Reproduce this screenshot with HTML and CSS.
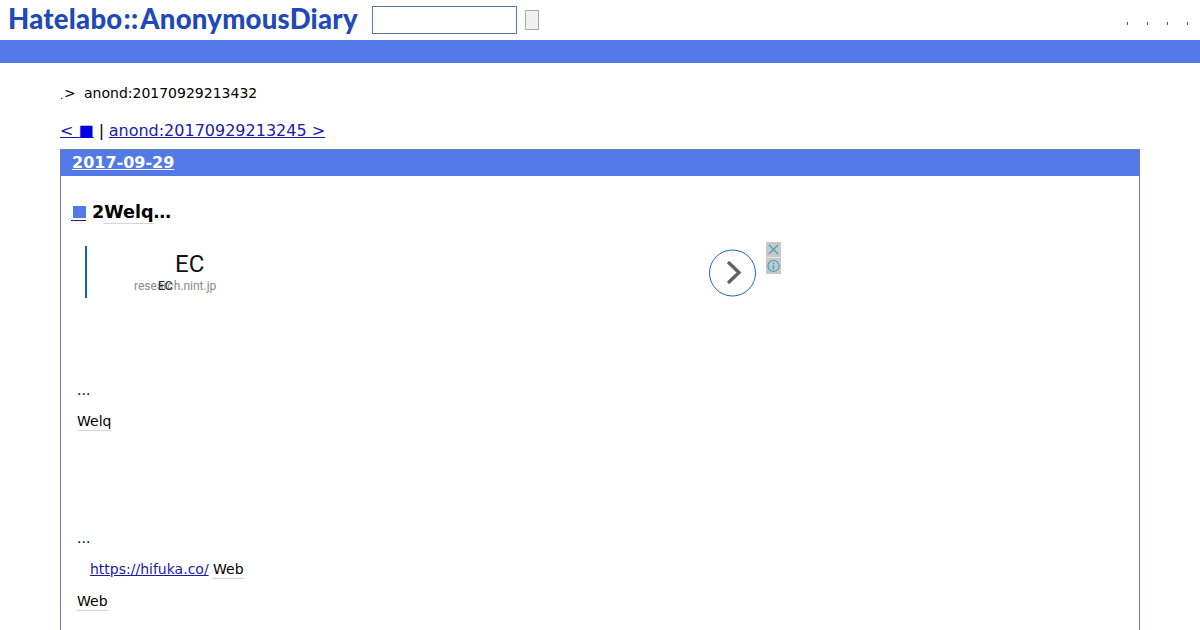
FILE: index.html
```html
<!DOCTYPE html>
<html lang="ja">
<head>
<meta charset="utf-8">
<title>anond:20170929213432</title>
<link rel="stylesheet" href="styles.css">
</head>
<body>
<header class="top">
  <a class="logo">Hatelabo<span class="logo-sep">::</span>AnonymousDiary</a>
  <form class="search">
    <input class="search-input" type="text">
    <button class="search-btn" type="button"></button>
  </form>
  <nav class="top-links">
    <span class="tick"></span><span class="tick"></span><span class="tick"></span><span class="tick"></span>
  </nav>
</header>
<div class="band"></div>
<main class="page">
  <div class="crumb"><span class="crumb-dot">.</span><span class="crumb-gt">&gt;</span><span class="crumb-id">anond:20170929213432</span></div>
  <div class="pager"><a href="#">&lt; <span class="square">■</span></a> | <a class="next" href="#">anond:20170929213245 &gt;</a></div>
  <section class="day">
    <h2 class="day-head"><a href="#">2017-09-29</a></h2>
    <div class="day-body">
      <h3 class="entry-title"><a class="entry-mark" href="#"><span class="mark-box"></span></a><span class="entry-text">2<span class="kw">Welq</span>…</span></h3>
      <aside class="ad">
        <div class="ad-rule"></div>
        <div class="ad-copy">
          <div class="ad-title">EC</div>
          <div class="ad-domain">research.nint.jp</div>
          <div class="ad-over">EC</div>
        </div>
        <svg class="ad-arrow" width="49" height="48" viewBox="0 0 49 48">
          <circle cx="24.500" cy="24" r="23" fill="#fff" stroke="#1c68b4" stroke-width="1"/>
          <path d="M20 13 L31 23.500 L20 34" fill="none" stroke="#5f6368" stroke-width="3.400"/>
        </svg>
        <svg class="ad-choices" width="15" height="32" viewBox="0 0 15 32">
          <rect width="15" height="15.500" fill="#c8c8c8"/>
          <rect y="16" width="15" height="16" fill="#c8c8c8"/>
          <path d="M3 3 L12 12 M12 3 L3 12" stroke="#3fa5bd" stroke-width="1.200"/>
          <circle cx="7.500" cy="24" r="5.500" fill="none" stroke="#3fa5bd" stroke-width="1.200"/>
          <path d="M7.500 20.800 V22.200 M7.500 23.200 V27.200" stroke="#3fa5bd" stroke-width="1.500"/>
        </svg>
      </aside>
      <p class="line first">...</p>
      <p class="line"><span class="kw">Welq</span></p>
      <p class="line gap">...</p>
      <p class="line indent"><a href="#">https://hifuka.co/</a> <span class="kw">Web</span></p>
      <p class="line last"><span class="kw">Web</span></p>
    </div>
  </section>
</main>
</body>
</html>
```
FILE: styles.css
```css
html, body { margin: 0; padding: 0; background: #fff; overflow: hidden; height: 630px; }
body { font-family: "DejaVu Sans", sans-serif; font-size: 14px; color: #000; }
a { color: #1a1aa8; }
.top { height: 40px; display: flex; align-items: center; box-sizing: border-box; }
.logo { margin-left: 8px; width: 350px; font-family: "Lato", sans-serif; font-weight: 900; font-size: 27.500px; letter-spacing: 0.25px; line-height: 36px; margin-top: -2px; color: #2148b8; white-space: nowrap; }
.logo-sep { margin: 0 2px 0 1px; }
.search { display: flex; align-items: center; margin-left: 14px; }
.search-input { width: 145px; height: 28px; box-sizing: border-box; border: 1px solid #5a78a8; padding: 0; background: #fff; margin: 0; }
.search-btn { width: 14px; height: 20px; margin: 0 0 0 8px; padding: 0; background: #efefef; border: 1px solid #a9a9a9; box-sizing: border-box; }
.top-links { margin-left: auto; display: flex; gap: 19px; padding-right: 12px; align-items: center; padding-top: 7px; }
.tick { width: 1px; height: 3px; background: #555; }
.band { height: 23px; background: #5279e7; }
.page { padding: 0 60px; }
.crumb { margin-top: 22px; height: 17px; line-height: 17px; display: flex; white-space: nowrap; }
.crumb-dot { width: 4px; font-size: 10px; line-height: 22px; }
.crumb-gt { width: 20px; }
.pager { margin-top: 19px; font-size: 16px; line-height: 19px; height: 19px; white-space: nowrap; }
.next { margin-left: -0.5px; }
.square { color: #0000e6; }
.day { margin-top: 9px; border: 1px solid #6b7fb0; border-bottom: 0; height: 481px; box-sizing: border-box; }
.day-head { margin: 0; height: 26px; background: #5279e7; padding-left: 11px; font-size: 16px; line-height: 26px; font-weight: 700; }
.day-head a { color: #fff; }
.day-body { padding: 0 16px 0 10px; }
.entry-title { margin: 0; padding-top: 26px; font-size: 17.600px; line-height: 20px; height: 20px; font-weight: 700; display: flex; align-items: center; white-space: nowrap; }
.entry-mark { display: block; width: 15px; height: 14px; margin-right: 6px; border-bottom: 1px solid #1a1aa8; margin-top: 3px; }
.mark-box { display: block; margin-left: 2px; width: 13px; height: 12px; background: #5279e7; }
.kw { border-bottom: 1px solid #d4d4d4; padding-bottom: 1px; }
.ad { position: relative; height: 52px; margin: 24px 0 0 14px; display: flex; width: 697px; }
.ad-rule { width: 2px; height: 52px; background: #1c5da8; }
.ad-copy { position: relative; width: 160px; font-family: "Roboto", sans-serif; }
.ad-title { position: absolute; left: 88px; top: 4px; font-size: 24px; line-height: 28px; color: #111; }
.ad-domain { position: absolute; left: 47px; top: 32px; font-size: 12px; line-height: 16px; color: #8a8a8a; white-space: nowrap; }
.ad-over { position: absolute; left: 71px; top: 32px; font-size: 12px; line-height: 16px; color: #222; }
.ad-arrow { position: absolute; left: 623px; top: 3px; }
.ad-choices { position: absolute; left: 681px; top: -4px; }
.line { margin: 0; line-height: 20px; height: 20px; padding-left: 6px; white-space: nowrap; }
.first { margin-top: 82px; }
.line + .line { margin-top: 11px; }
.line + .gap { margin-top: 97px; }
.line + .last { margin-top: 12px; }
.indent { padding-left: 19px; }
```
